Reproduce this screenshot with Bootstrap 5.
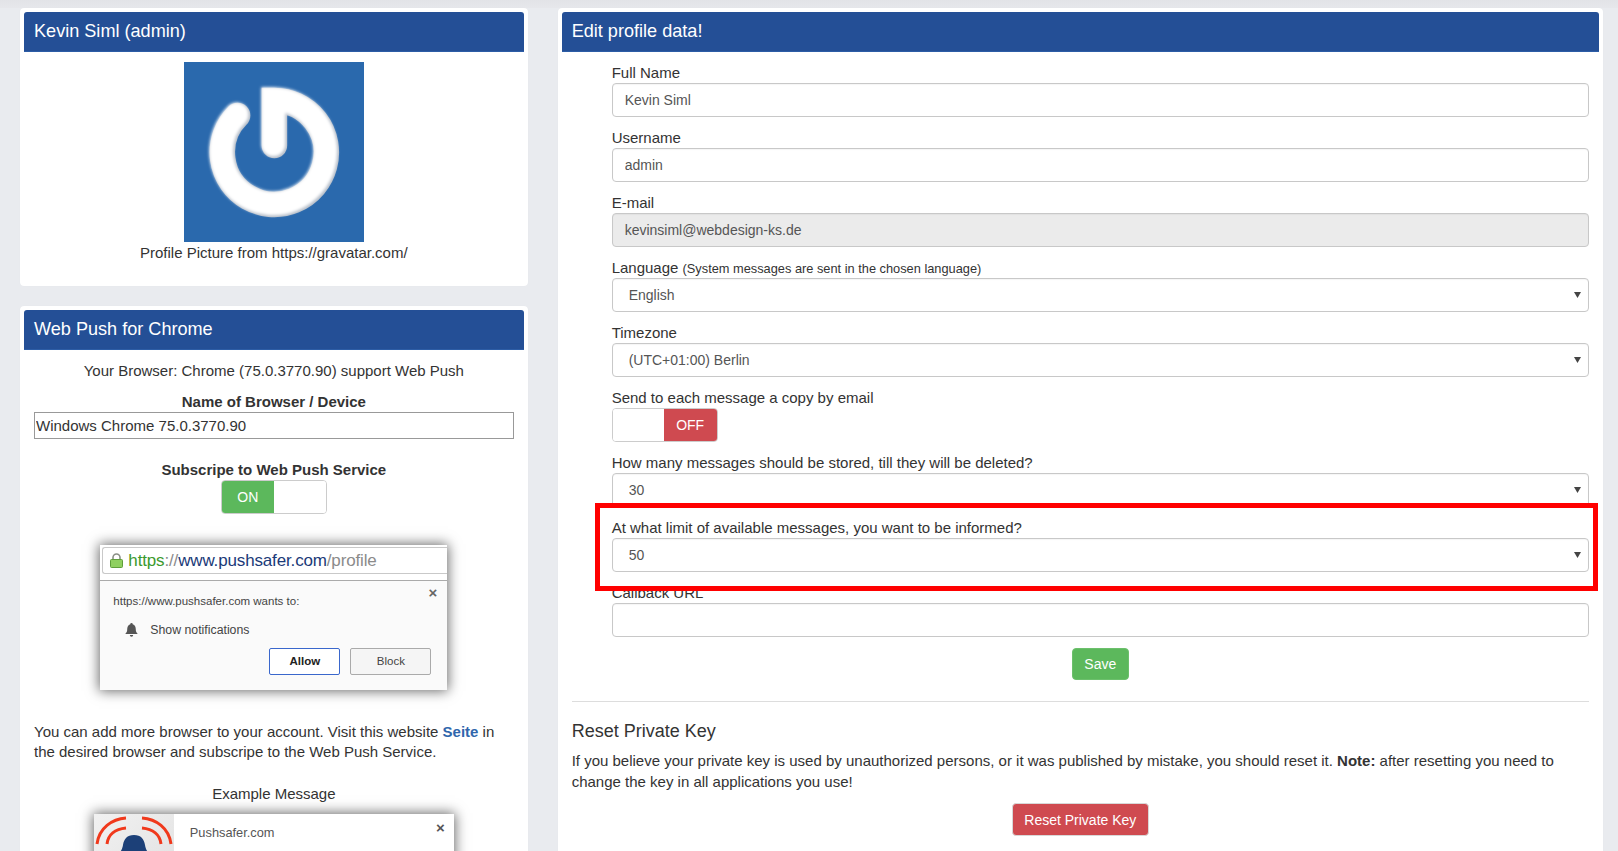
<!DOCTYPE html>
<html lang="en">
<head>
<meta charset="utf-8">
<title>Pushsafer profile</title>
<link href="https://cdn.jsdelivr.net/npm/bootstrap@5.3.0/dist/css/bootstrap.min.css" rel="stylesheet">
<style>
html,body{height:851px;overflow:hidden}
body{background:#e9ebef;color:#333;font-family:"Liberation Sans",Arial,sans-serif;font-size:15px;line-height:20px}
.page-top{height:8px;background:linear-gradient(#e2e3e7,#e6e7eb)}
.page-wrap{padding:0 15px 0 20px}
.page-row{--bs-gutter-x:30px;--bs-gutter-y:0}
.panel{background:#fff;border-radius:4px;padding:4px;box-shadow:0 0 1px rgba(0,0,0,.05);position:relative}
.panel-tall{padding-bottom:40px}
.panel-head{background:#244f96;color:#fff;height:40px;line-height:39px;padding:0 10px;font-size:18.100px;border-radius:3px 3px 0 0;border-bottom:1px solid #2d5da6}
.panel-body-x{padding:10px}
.push-body{padding-top:11px}
.first-card{height:278px;margin-bottom:20px}
.avatar{display:block;width:180px;height:180px;margin:0 auto 1px}
.cap{margin:0}
.tight{margin:0;line-height:20.300px}
.mt-11{margin-top:9px}
.plain-input{display:block;width:100%;height:27px;border:1px solid #999;padding:0 1px;margin-top:0;color:#333;font-size:15px;font-family:inherit;outline:0;background:#fff}
.t-label{font-weight:700;margin:21px 0 0}
.name-label{font-weight:700;margin:11px 0 0}
.tog{display:flex;width:106px;height:34px;border:1px solid #ccc;border-radius:4px;overflow:hidden;margin:0 auto;font-size:14px;color:#fff;line-height:32px;text-align:center}
.tog-on{background:#5cb85c;width:52px}
.tog-off{background:#cf4a50;width:53px}
.tog-blank{flex:1;background:#fff}
.tog-form{margin:0}
.popup{width:347px;height:145px;margin:31px auto 32px;background:#fff;box-shadow:0 0 12px 1px rgba(0,0,0,.6);position:relative;font-size:11.500px;color:#444;overflow:hidden}
.bar{height:27px;margin:2px 0 0 2px;border:1px solid #c9c9c9;border-right:0;border-radius:3px 0 0 3px;background:#fff;display:flex;align-items:center;padding-left:7px;gap:5px;font-size:17px;color:#1b3a78;letter-spacing:-.15px}
.bar-green{color:#3c9a2e}
.bar-gray{color:#8b8b8b}
.dlg{background:#fafafa;border-top:1px solid #aaa;margin-top:6px;height:111px;padding:10px 13px;position:relative}
.dlg-x{position:absolute;right:10px;top:4px;font-size:15px;font-weight:700;color:#666;line-height:16px}
.dlg-row{display:flex;align-items:center;gap:12px;margin:9px 0 0 12px;font-size:12.300px}
.dlg-btns{display:flex;justify-content:flex-end;gap:10px;margin:8px 3px 0 0}
.dlg-btn{height:27px;border:1px solid #aaa;border-radius:2px;background:#f5f5f5;line-height:25px;text-align:center;width:81px;color:#444}
.dlg-allow{width:71px;border-color:#3a67cc;background:#fff;color:#222;font-weight:700}
.blue-link{color:#2f66ac;font-weight:700;text-decoration:none}
.example-title{margin:21.600px 0 10px}
.example{width:360px;height:120px;margin:0 auto;background:#fff;box-shadow:0 0 12px 1px rgba(0,0,0,.6);display:flex;position:relative;color:#555;font-size:12.800px}
.example-icon{width:80px;background:linear-gradient(135deg,#f1f1f1,#dcdcdc)}
.example-text{padding:9px 16px}
.example-x{position:absolute;right:9px;top:4px;font-weight:700;font-size:15px}
.fld-wrap{padding-left:40px}
.fld{margin-bottom:10px}
.fld-label{display:block;height:21px;line-height:21px;margin:0;color:#333}
.fld-label small{font-size:12.800px}
.fld-input{display:block;width:100%;height:34px;border:1px solid #c8c8c8;border-radius:4px;padding:0 12px;color:#555;font-size:14px;font-family:inherit;background:#fff;outline:0;box-shadow:inset 0 1px 1px rgba(0,0,0,.04)}
.fld-input:disabled{background:#ebebeb;color:#555;opacity:1}
select.fld-input{appearance:none;-webkit-appearance:none;padding-left:16px;background-image:url("data:image/svg+xml,%3Csvg xmlns='http://www.w3.org/2000/svg' width='7' height='6'%3E%3Cpath d='M0 0h7L3.5 6z' fill='%23444'/%3E%3C/svg%3E");background-repeat:no-repeat;background-position:right 7px center}
.btn-save{display:block;width:57px;height:32px;margin:11px auto 0;padding:0;background:#5cb85c;border:1px solid #6cc06c;color:#fff;font-size:14px;border-radius:4px}
.rule{margin:21px 0 0;border-color:#ddd;opacity:1}
.reset-title{font-size:18px;font-weight:400;margin:19px 0 10px;line-height:20px;color:#333}
.reset-text{margin:0 0 11px;line-height:20.600px}
.btn-reset{display:block;width:137px;height:33px;margin:0 auto;padding:0;background:#cf4a50;border:1px solid #d8d8d8;color:#fff;font-size:14px;border-radius:4px}
.red-frame{position:absolute;left:37px;top:495px;width:1003px;height:88px;border:5px solid #f00;pointer-events:none}
</style>
</head>
<body>
<div class="page-top"></div>
<div class="container-fluid page-wrap">
  <div class="row page-row">
    <div class="col-4">
      <div class="panel first-card">
        <div class="panel-head">Kevin Siml (admin)</div>
        <div class="panel-body-x text-center">
          <svg class="avatar" viewBox="0 0 180 180" role="img" aria-label="Gravatar logo">
            <defs>
              <filter id="soft" x="-20%" y="-20%" width="140%" height="140%"><feGaussianBlur stdDeviation="1.800"/></filter>
              <filter id="edge" x="-20%" y="-20%" width="140%" height="140%"><feGaussianBlur stdDeviation=".5"/></filter>
            </defs>
            <rect width="180" height="180" fill="#2a69ad"/>
            <path d="M90.400 83.400V38.400A52 52 0 1 1 53.600 53.600" fill="none" stroke="#b4bcc7" stroke-width="25.500" stroke-linecap="round" filter="url(#edge)"/>
            <path d="M89.300 82.300V37.300A52 52 0 1 1 52.500 52.500" fill="none" stroke="#fff" stroke-width="24" stroke-linecap="round" filter="url(#soft)"/>
          </svg>
          <p class="cap">Profile Picture from https://gravatar.com/</p>
        </div>
      </div>
      <div class="panel">
        <div class="panel-head">Web Push for Chrome</div>
        <div class="panel-body-x push-body">
          <p class="cap text-center">Your Browser: Chrome (75.0.3770.90) support Web Push</p>
          <p class="name-label text-center">Name of Browser / Device</p>
          <input class="plain-input" type="text" value="Windows Chrome 75.0.3770.90" aria-label="Name of Browser / Device">
          <p class="t-label text-center">Subscripe to Web Push Service</p>
          <div class="tog"><div class="tog-on">ON</div><div class="tog-blank"></div></div>
          <div class="popup">
            <div class="bar">
              <svg width="13" height="15" viewBox="0 0 13 15"><path d="M3 7V4.500a3.500 3.500 0 0 1 7 0V7" fill="none" stroke="#8a8f86" stroke-width="1.600"/><rect x=".5" y="6.500" width="12" height="8" rx="1" fill="#8fd060" stroke="#5f9e3b"/></svg>
              <span><span class="bar-green">https</span><span class="bar-gray">://</span>www.pushsafer.com<span class="bar-gray">/profile</span></span>
            </div>
            <div class="dlg">
              <span class="dlg-x">×</span>
              <div>https://www.pushsafer.com wants to:</div>
              <div class="dlg-row">
                <svg width="13" height="14" viewBox="0 0 13 14"><path d="M6.500 0a1.200 1.200 0 0 1 1.200 1.300C10 2 10.800 4 10.800 6.500c0 2.200.7 3.300 2 4.500H.2c1.300-1.200 2-2.300 2-4.500 0-2.500.8-4.500 3.100-5.200A1.200 1.200 0 0 1 6.500 0zM4.800 12h3.400a1.700 1.700 0 0 1-3.400 0z" fill="#555"/></svg>
                <span>Show notifications</span>
              </div>
              <div class="dlg-btns"><div class="dlg-btn dlg-allow">Allow</div><div class="dlg-btn">Block</div></div>
            </div>
          </div>
          <p class="tight">You can add more browser to your account. Visit this website <a class="blue-link" href="#">Seite</a> in the desired browser and subscripe to the Web Push Service.</p>
          <p class="example-title text-center">Example Message</p>
          <div class="example">
            <div class="example-icon">
              <svg width="80" height="80" viewBox="0 0 80 80"><g fill="none" stroke="#f0391c" stroke-width="3"><path d="M3 30C5 14 18 5 32 4"/><path d="M77 30C75 14 62 5 48 4"/><path d="M13 30C14 21 21 15 32 14"/><path d="M67 30C66 21 59 15 48 14"/></g><path d="M40 21c7 0 10 4 11 10 1 6 4 9 8 13v36H21V44c4-4 7-7 8-13 1-6 4-10 11-10z" fill="#1c4078"/></svg>
            </div>
            <div class="example-text">Pushsafer.com<br><span class="d-block mt-11">Loaded message for you to read</span></div>
            <span class="example-x">×</span>
          </div>
        </div>
      </div>
    </div>
    <div class="col-8">
      <div class="panel panel-tall">
        <div class="panel-head">Edit profile data!</div>
        <div class="panel-body-x">
          <form class="fld-wrap" onsubmit="return false">
            <div class="fld"><label class="fld-label" for="f1">Full Name</label><input class="fld-input" id="f1" value="Kevin Siml"></div>
            <div class="fld"><label class="fld-label" for="f2">Username</label><input class="fld-input" id="f2" value="admin"></div>
            <div class="fld"><label class="fld-label" for="f3">E-mail</label><input class="fld-input" id="f3" value="kevinsiml@webdesign-ks.de" disabled></div>
            <div class="fld"><label class="fld-label" for="f4">Language <small>(System messages are sent in the chosen language)</small></label><select class="fld-input" id="f4"><option>English</option></select></div>
            <div class="fld"><label class="fld-label" for="f5">Timezone</label><select class="fld-input" id="f5"><option>(UTC+01:00) Berlin</option></select></div>
            <div class="fld"><span class="fld-label">Send to each message a copy by email</span><div class="tog tog-form"><div class="tog-blank"></div><div class="tog-off">OFF</div></div></div>
            <div class="fld"><label class="fld-label" for="f6">How many messages should be stored, till they will be deleted?</label><select class="fld-input" id="f6"><option>30</option></select></div>
            <div class="fld"><label class="fld-label" for="f7">At what limit of available messages, you want to be informed?</label><select class="fld-input" id="f7"><option>50</option></select></div>
            <div class="fld"><label class="fld-label" for="f8">Callback URL</label><input class="fld-input" id="f8"></div>
            <button class="btn-save" type="button">Save</button>
          </form>
          <hr class="rule">
          <h2 class="reset-title">Reset Private Key</h2>
          <p class="reset-text">If you believe your private key is used by unauthorized persons, or it was published by mistake, you should reset it. <b>Note:</b> after resetting you need to change the key in all applications you use!</p>
          <button class="btn-reset" type="button">Reset Private Key</button>
        </div>
        <div class="red-frame"></div>
      </div>
    </div>
  </div>
</div>
</body>
</html>
